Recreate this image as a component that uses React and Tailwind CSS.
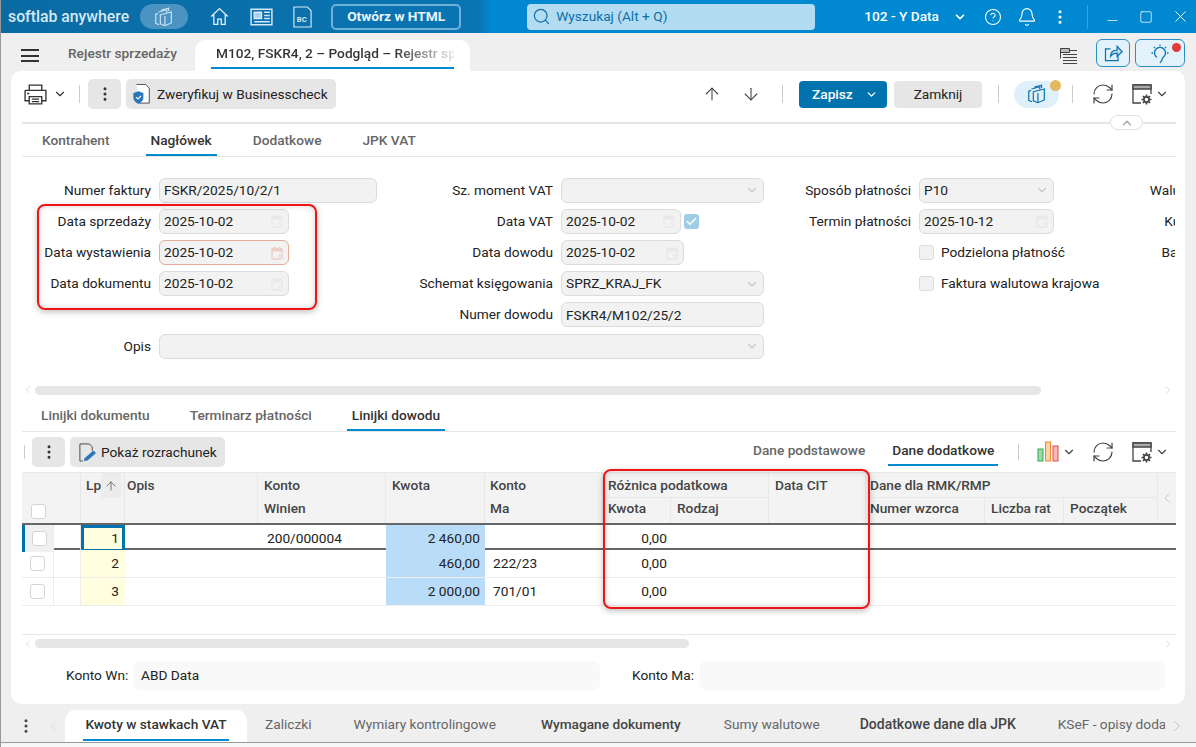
import { ArrowDown, ArrowUp, ChevronDown, ChevronLeft, ChevronRight, ChevronUp, CircleHelp, Bell, EllipsisVertical, Minus, Search, Square, X, RefreshCw, Check } from "lucide-react"

const tableCols =
  "grid-cols-[32px_27px_44px_133px_128px_99px_118px_68px_98px_97px_119px_79px_94px_17px]"

function CubeStack({ className = "", color = "currentColor" }) {
  return (
    <svg viewBox="0 0 24 24" fill="none" stroke={color} strokeWidth="1.3" className={className}>
      <path d="M9 4.5 17 2.5v3M5.5 8 3 9v10l3.5 1.5" />
      <path d="M6 6.5l9-2.5v3" />
      <path d="M8 9.5l12-3v12l-7 3-5-2z" />
      <path d="M13 11v10.5" />
    </svg>
  )
}

function CalendarIcon({ active }) {
  const c = active ? "#ecd0c6" : "#e8e8e8"
  return (
    <svg viewBox="0 0 14 14" className="w-[14px] h-[14px] shrink-0">
      <path
        d="M2 3.5a1 1 0 0 1 1-1h8a1 1 0 0 1 1 1V12a1 1 0 0 1-1 1H3a1 1 0 0 1-1-1z"
        fill="none"
        stroke={c}
        strokeWidth="1.4"
      />
      <path d="M2 3h10v2.6H2z M4 1h1.4v2H4z M8.6 1H10v2H8.6z" fill={c} />
      <rect x="8.5" y="8.8" width="2" height="2" fill={c} />
    </svg>
  )
}

function GridSettings() {
  return (
    <svg viewBox="0 0 24 24" fill="none" stroke="#444" strokeWidth="1.3" className="w-6 h-6">
      <path d="M11 21H3V3h18v9" />
      <path d="M3 3h18v4H3z" fill="#aaa" />
      <circle cx="16.500" cy="17.500" r="2.600" strokeWidth="1.700" />
      <path
        d="M16.500 12.500v2M16.500 20.500v2M11.500 17.500h2M19.500 17.500h2M13 14l1.300 1.300M18.700 19.700 20 21M13 21l1.300-1.300M18.700 15.300 20 14"
        strokeWidth="1.700"
      />
    </svg>
  )
}

function Label({ children }) {
  return <div className="text-right text-[13.7px] leading-[31px] text-[#222] whitespace-nowrap">{children}</div>
}

function Field({ value, width = "w-full", kind, active }) {
  return (
    <div
      className={`${width} h-[25px] flex items-center justify-between pl-[4px] pr-[4px] rounded-[6px] border bg-[#f2f2f2] text-[13.7px] text-[#222] ${
        active ? "border-[#e3ab98]" : "border-[#dcdcdc]"
      }`}
    >
      <span className="whitespace-nowrap">{value}</span>
      {kind === "date" && <CalendarIcon active={active} />}
      {kind === "select" && <ChevronDown className="w-[14px] h-[14px] text-[#c8c8c8]" />}
    </div>
  )
}

function Cell({ children, className = "" }) {
  return <div className={`pl-2 flex items-center h-[31px] ${className}`}>{children}</div>
}

function FormCheck({ label }) {
  return (
    <Cell className="col-span-1 relative">
      <div className="w-[15px] h-[15px] shrink-0 rounded-[3px] border border-[#dcdcdc] bg-[#f2f2f2]" />
      <span className="ml-[7px] text-[13.7px] text-[#222] whitespace-nowrap">{label}</span>
    </Cell>
  )
}

function CutLabel({ children }) {
  return (
    <div className="overflow-hidden h-[31px]">
      <div className="w-[138px] text-right text-[13.7px] leading-[31px] text-[#222]">{children}</div>
    </div>
  )
}

function Tab({ label, active }) {
  return (
    <div
      className={`h-full flex items-center px-[5px] pt-[2px] border-b-2 text-[13.7px] font-medium ${
        active ? "border-[#0089d0] text-[#333]" : "border-transparent text-[#666]"
      }`}
    >
      {label}
    </div>
  )
}

function HeadCell({ children, className = "" }) {
  return (
    <div className={`pl-[6px] pr-[5px] pt-[2px] text-[13.7px] font-medium text-[#444] border-r border-b border-[#e8e8e8] whitespace-nowrap overflow-hidden ${className}`}>
      {children}
    </div>
  )
}

function Box() {
  return <div className="w-[15px] h-[15px] rounded-[3px] border border-[#d4d4d4] bg-white" />
}

function Row({ lp, winien, kwota, ma, selected }) {
  return (
    <div
      className={`grid ${tableCols} text-[13.7px] text-[#222] ${
        selected ? "h-[27px] border-y-[2px] border-[#666]" : "h-[28px] border-b border-[#ececec]"
      }`}
    >
      <div className={`flex items-center justify-center border-r border-[#ececec] ${selected ? "bg-[#f0f0f0] border-l-[3px] border-l-[#0073ae]" : ""}`}>
        <Box />
      </div>
      <div className="border-r border-[#ececec]" />
      <div
        className={`flex items-center justify-end bg-[#ffffe0] ${
          selected ? "pr-[3px] border-[3px] border-[#0073ae]" : "pr-[6px]"
        }`}
      >
        {lp}
      </div>
      <div />
      <div className="flex items-center pl-[9px]">{winien}</div>
      <div className="flex items-center justify-end pr-[5px] bg-[#b9dcf8]">{kwota}</div>
      <div className="flex items-center pl-[8px]">{ma}</div>
      <div className="flex items-center justify-end pr-[4px]">0,00</div>
    </div>
  )
}

function Toolbar2Icons() {
  return (
    <div className="flex items-center">
      <svg viewBox="0 0 22 22" className="w-[22px] h-[22px] ml-[18px]">
        <rect x="1" y="8" width="5" height="12" fill="#9fd8a8" stroke="#2fa84f" />
        <rect x="8.500" y="1" width="5" height="19" fill="#fbd3a8" stroke="#ee8a2d" />
        <rect x="16" y="5" width="5" height="15" fill="#f6b8b8" stroke="#e04a4a" />
      </svg>
      <ChevronDown className="w-[14px] h-[14px] ml-[3px] text-[#444]" />
      <RefreshCw className="w-[24px] h-[24px] ml-[15px] text-[#444]" strokeWidth={1.2} />
      <div className="ml-[15px]">
        <GridSettings />
      </div>
      <ChevronDown className="ml-[1px] w-[14px] h-[14px] text-[#444]" />
    </div>
  )
}

export default function App() {
  return (
    <div className="relative w-[1196px] h-[747px] overflow-hidden bg-[#efefef] border-l border-[#999] font-['Roboto',sans-serif] flex flex-col">
      {/* top bar */}
      <div className="h-[33px] shrink-0 flex items-center text-white bg-[linear-gradient(90deg,#0a6ba3_0%,#0a75b3_40%,#0088d0_41%,#0088d0_100%)]">
        <span className="ml-[7px] text-[15.8px] font-medium text-[#d5e8f3] whitespace-nowrap">softlab anywhere</span>
        <div className="ml-[11px] w-[48px] h-[25px] rounded-full bg-[#4b94c1] flex items-center justify-center shrink-0">
          <CubeStack className="w-[22px] h-[22px]" color="#c9e2f1" />
        </div>
        <svg viewBox="0 0 24 24" fill="none" stroke="#e3f1f9" strokeWidth="1.5" className="ml-[21px] w-[21px] h-[21px] shrink-0">
          <path d="M2.500 12 12 3l9.500 9M5.500 10v11h4.500v-6h4v6h4.500V10" />
        </svg>
        <svg viewBox="0 0 24 24" fill="none" stroke="#d5e8f3" strokeWidth="1.4" className="ml-[19px] w-[25px] h-[25px] shrink-0">
          <path d="M2 5h20v15H2z" />
          <path d="M5 8h7v6H5z" fill="#a9d2ea" />
          <path d="M14.500 8H20M14.500 11H20M14.500 14H20M5 17h15" />
        </svg>
        <svg viewBox="0 0 22 24" fill="none" stroke="#d5e8f3" strokeWidth="1.2" className="ml-[18px] w-[21px] h-[25px] shrink-0">
          <path d="M2 2h14l4 4v17H2z" />
          <text x="5" y="18" fontSize="8" fontWeight="700" fill="#d5e8f3" stroke="none" fontFamily="Roboto">BC</text>
        </svg>
        <div className="ml-[18px] w-[130px] h-[26px] shrink-0 rounded-[5px] border-2 border-[#6fb1d8] flex items-center justify-center text-[13.7px] font-bold text-[#eaf5fb] whitespace-nowrap">
          Otwórz w HTML
        </div>
        <div className="ml-[66px] w-[288px] h-[26px] shrink-0 rounded-[4px] bg-[#b3dcf3] flex items-center pl-[5px] text-[13.7px] text-[#0b6fa8]">
          <Search className="w-[19px] h-[19px]" strokeWidth={1.5} />
          <span className="ml-[5px]">Wyszukaj (Alt + Q)</span>
        </div>
        <span className="ml-[49px] w-[74px] shrink-0 text-[13.7px] font-medium whitespace-nowrap">102 - Y Data</span>
        <ChevronDown className="ml-[15px] w-[14px] h-[14px] shrink-0" strokeWidth={3} />
        <CircleHelp className="ml-[17px] w-[18px] h-[18px] shrink-0" strokeWidth={1.4} />
        <Bell className="ml-[15px] w-[20px] h-[20px] shrink-0" strokeWidth={1.4} />
        <EllipsisVertical className="ml-[14px] w-[18px] h-[18px] shrink-0" strokeWidth={2.2} />
        <div className="ml-[18px] w-px h-[24px] shrink-0 bg-[#3aa3dc]" />
        <Minus className="ml-[17px] w-[15px] h-[15px] mt-[8px] shrink-0" strokeWidth={1.2} />
        <Square className="ml-[19px] w-[14px] h-[14px] shrink-0" strokeWidth={1.3} />
        <X className="ml-[18px] w-[19px] h-[19px] shrink-0" strokeWidth={1.2} />
      </div>

      {/* document tabs */}
      <div className="h-[38px] shrink-0 flex items-end">
        <div className="mb-[9px] ml-[20px] w-[18px] h-[13px] flex flex-col justify-between">
          <div className="h-[2px] bg-[#333]" />
          <div className="h-[2px] bg-[#333]" />
          <div className="h-[2px] bg-[#333]" />
        </div>
        <span className="mb-[7px] ml-[29px] w-[109px] text-[13.7px] font-medium text-[#666] whitespace-nowrap">Rejestr sprzedaży</span>
        <div className="ml-[18px] w-[275px] h-[31px] shrink-0 bg-white rounded-t-[10px] px-[16px]">
          <div className="h-[29px] border-b-2 border-[#0089d0] pl-[5px] flex items-center overflow-hidden text-[13.7px] font-medium text-[#333] whitespace-nowrap">
            <span className="bg-[linear-gradient(90deg,#333_75%,#e5e5e5_100%)] bg-clip-text text-transparent w-full overflow-hidden">
              M102, FSKR4, 2 – Podgląd – Rejestr sp
            </span>
          </div>
        </div>
        <svg viewBox="0 0 19 20" fill="none" stroke="#444" className="mb-[5px] ml-[589px] w-[19px] h-[20px] shrink-0">
          <path d="M1.500 2.500h9v4h-9z" fill="#bbb" />
          <path d="M1.500 2.500v10M10.500 4.500H18M4 8.500h14M4 11.500h14M4 14.500h14M4 17.500h14" />
        </svg>
        <div className="mb-[4px] ml-[18px] w-[34px] h-[28px] shrink-0 rounded-[6px] border border-[#2c8fc4] bg-[#e2f1fa] flex items-center justify-center">
          <svg viewBox="0 0 24 24" fill="none" stroke="#0b73ad" strokeWidth="1.5" className="w-[20px] h-[20px]">
            <path d="M9 7H3v14h15v-6" />
            <path d="M9 16c0-5 3-7.500 8-7.500V4l6 6.500L17 16v-4c-3 0-6 1-8 4z" fill="#bfe0f2" />
          </svg>
        </div>
        <div className="relative mb-[4px] ml-[5px] w-[50px] h-[28px] shrink-0 rounded-[6px] border border-[#2c8fc4] bg-[#e2f1fa] flex items-center justify-center">
          <svg viewBox="0 0 24 24" fill="none" stroke="#0b73ad" strokeWidth="1.3" className="mt-[2px] w-[24px] h-[24px]">
            <path d="M9 15.500a5.500 5.500 0 1 1 6 0c-.8.6-1 1.500-1 2.500l-2 3" />
            <path d="M12 2.500v1.500M3.500 11H5M20.500 11H19M6 5l1 1M18 5l-1 1" />
          </svg>
          <div className="absolute right-[3px] top-[3px] w-[9px] h-[9px] rounded-full bg-[#e23b3b]" />
        </div>
      </div>

      {/* main card */}
      <div className="ml-[10px] w-[1174px] h-[633px] shrink-0 bg-white rounded-[10px] pl-[11px] pr-[9px] flex flex-col relative z-0">
        {/* toolbar */}
        <div className="relative h-[53px] shrink-0 border-b-2 border-[#e6e6e6] flex items-center pb-[5px]">
          <svg viewBox="0 0 24 24" fill="none" stroke="#333" strokeWidth="1.3" className="ml-[1px] w-[25px] h-[25px]">
            <path d="M6 8V3h12v5M2 8h20v10h-4M6 18H2V8M6 14h12v7H6z" />
            <path d="M8.500 16.500h7M8.500 18.800h7M4 11h2" />
          </svg>
          <ChevronDown className="ml-[5px] w-[14px] h-[14px] text-[#333]" strokeWidth={2} />
          <div className="ml-[12px] w-px h-[18px] bg-[#ccc]" />
          <div className="ml-[8px] w-[33px] h-[30px] rounded-[5px] bg-[#e6e6e6] flex items-center justify-center">
            <EllipsisVertical className="w-[18px] h-[18px] text-[#333]" strokeWidth={2} />
          </div>
          <div className="ml-[5px] w-[210px] h-[30px] rounded-[5px] bg-[#e6e6e6] flex items-center pl-[6px] text-[13.7px] text-[#222] whitespace-nowrap">
            <svg viewBox="0 0 22 24" className="w-[20px] h-[22px] shrink-0">
              <path d="M5 1.500h10l4 4V22H8" fill="#fff" stroke="#444" />
              <path d="M1.500 11 7 9l5.500 2v5c0 3-2.500 5-5.500 7-3-2-5.500-4-5.500-7z" fill="#2a77b8" />
              <path d="M4.500 15.500l2 2 3.500-3.500" fill="none" stroke="#fff" strokeWidth="1.300" />
            </svg>
            <span className="ml-[5px]">Zweryfikuj w Businesscheck</span>
          </div>
          <ArrowUp className="ml-[366px] w-[20px] h-[20px] text-[#444]" strokeWidth={1.3} />
          <ArrowDown className="ml-[19px] w-[20px] h-[20px] text-[#444]" strokeWidth={1.3} />
          <div className="ml-[21px] w-px h-[18px] bg-[#ccc]" />
          <div className="ml-[16px] w-[88px] h-[27px] rounded-[4px] bg-[#0073ae] text-white flex items-center justify-between pl-[13px] pr-[9px] text-[13.7px] font-medium">
            Zapisz
            <ChevronDown className="w-[13px] h-[13px]" strokeWidth={2.4} />
          </div>
          <div className="ml-[7px] w-[88px] h-[27px] rounded-[4px] bg-[#e6e6e6] flex items-center justify-center text-[13.7px] text-[#222]">
            Zamknij
          </div>
          <div className="ml-[16px] w-px h-[18px] bg-[#ccc]" />
          <div className="relative ml-[15px] w-[45px] h-[27px] rounded-full bg-[#e0f0fa] flex items-center justify-center">
            <CubeStack className="w-[22px] h-[22px]" color="#0b73ad" />
            <div className="absolute -right-[2px] -top-[1px] w-[11px] h-[11px] rounded-full bg-[#e5b95e]" />
          </div>
          <div className="ml-[13px] w-px h-[18px] bg-[#ccc]" />
          <RefreshCw className="ml-[18px] w-[24px] h-[24px] text-[#444]" strokeWidth={1.2} />
          <div className="ml-[15px]">
            <GridSettings />
          </div>
          <ChevronDown className="ml-[1px] w-[14px] h-[14px] text-[#444]" />
          <div className="absolute left-[1088px] top-[44px] w-[33px] h-[15px] rounded-full border border-[#e0e0e0] bg-white flex items-center justify-center">
            <ChevronUp className="w-[16px] h-[14px] text-[#aaa]" strokeWidth={2.5} />
          </div>
        </div>

        {/* header tabs */}
        <div className="h-[33px] shrink-0 border-b border-[#e6e6e6] flex gap-[31px] pl-[15px]">
          <Tab label="Kontrahent" />
          <Tab label="Nagłówek" active />
          <Tab label="Dodatkowe" />
          <Tab label="JPK VAT" />
        </div>

        {/* form */}
        <div className="mt-[17.7px] shrink-0 grid grid-cols-[129px_226px_176px_211px_147px_143px_121px] auto-rows-[31.2px]">
          <Label>Numer faktury</Label>
          <Cell><Field value="FSKR/2025/10/2/1" /></Cell>
          <Label>Sz. moment VAT</Label>
          <Cell><Field value="" kind="select" /></Cell>
          <Label>Sposób płatności</Label>
          <Cell><Field value="P10" kind="select" /></Cell>
          <CutLabel>Waluta</CutLabel>

          <Label>Data sprzedaży</Label>
          <Cell><Field value="2025-10-02" kind="date" width="w-[130px]" /></Cell>
          <Label>Data VAT</Label>
          <Cell>
            <Field value="2025-10-02" kind="date" width="w-[120px]" />
            <div className="ml-[3px] w-[15px] h-[15px] rounded-[3px] bg-[#9fcde6] flex items-center justify-center">
              <Check className="w-[13px] h-[13px] text-white" strokeWidth={2.5} />
            </div>
          </Cell>
          <Label>Termin płatności</Label>
          <Cell><Field value="2025-10-12" kind="date" /></Cell>
          <CutLabel>Kurs</CutLabel>

          <Label>Data wystawienia</Label>
          <Cell><Field value="2025-10-02" kind="date" width="w-[130px]" active /></Cell>
          <Label>Data dowodu</Label>
          <Cell><Field value="2025-10-02" kind="date" width="w-[123px]" /></Cell>
          <div />
          <FormCheck label="Podzielona płatność" />
          <CutLabel>Bank</CutLabel>

          <Label>Data dokumentu</Label>
          <Cell><Field value="2025-10-02" kind="date" width="w-[130px]" /></Cell>
          <Label>Schemat księgowania</Label>
          <Cell><Field value="SPRZ_KRAJ_FK" kind="select" /></Cell>
          <div />
          <FormCheck label="Faktura walutowa krajowa" />
          <div />

          <div className="col-span-2" />
          <Label>Numer dowodu</Label>
          <Cell><Field value="FSKR4/M102/25/2" /></Cell>
          <div className="col-span-3" />

          <Label>Opis</Label>
          <Cell className="col-span-3"><Field value="" kind="select" /></Cell>
        </div>

        {/* form scrollbar */}
        <div className="mt-[23.3px] h-[10px] shrink-0 flex items-center">
          <ChevronLeft className="w-[12px] h-[12px] text-[#ddd]" />
          <div className="ml-[1px] w-[1006px] h-[9px] rounded-full bg-[#e6e6e6]" />
          <ChevronRight className="ml-[121px] w-[12px] h-[12px] text-[#ddd]" />
        </div>

        {/* lines tabs */}
        <div className="mt-[5px] h-[32px] shrink-0 border-b border-[#e6e6e6] flex gap-[30px] pl-[14px]">
          <Tab label="Linijki dokumentu" />
          <Tab label="Terminarz płatności" />
          <Tab label="Linijki dowodu" active />
        </div>

        {/* lines toolbar */}
        <div className="h-[40px] shrink-0 flex items-center">
          <div className="ml-[2px] w-px h-[14px] bg-[#ccc]" />
          <div className="ml-[7px] w-[33px] h-[30px] rounded-[5px] bg-[#e6e6e6] flex items-center justify-center">
            <EllipsisVertical className="w-[18px] h-[18px] text-[#333]" strokeWidth={2} />
          </div>
          <div className="ml-[5px] w-[155px] h-[30px] rounded-[5px] bg-[#e6e6e6] flex items-center pl-[8px] text-[13.7px] text-[#222] whitespace-nowrap">
            <svg viewBox="0 0 20 22" className="w-[19px] h-[21px] shrink-0">
              <path d="M5 20H2V2h10l3 3v4" fill="none" stroke="#444" />
              <path d="M6 20l1-3 9-8 3 2.500-9 8z" fill="#2a77b8" />
            </svg>
            <span className="ml-[4px]">Pokaż rozrachunek</span>
          </div>
          <div className="ml-[524px] h-[29px] mb-[2px] flex">
            <div className="flex items-center px-[4px] text-[13.7px] font-medium text-[#666] border-b-2 border-transparent whitespace-nowrap">Dane podstawowe</div>
            <div className="ml-[19px] flex items-center px-[4px] text-[13.7px] font-medium text-[#333] border-b-2 border-[#0089d0] whitespace-nowrap">Dane dodatkowe</div>
          </div>
          <div className="ml-[20px] w-px h-[16px] bg-[#ccc]" />
          <Toolbar2Icons />
        </div>

        {/* table */}
        <div className="shrink-0">
          <div className={`grid ${tableCols} grid-rows-[25px_25px] bg-[#f3f3f3] border-t border-[#e8e8e8]`}>
            <div className="col-span-2 row-span-2 border-r border-[#e8e8e8] flex items-end pl-[9px] pb-[4px]">
              <Box />
            </div>
            <HeadCell className="row-span-2 !overflow-visible relative border-b-0 !pl-[5px]">
              Lp
              <div className="absolute right-[3px] top-0 w-[20px] h-[25px] bg-[#ececec] flex items-center justify-center">
                <ArrowUp className="w-[14px] h-[14px] text-[#666]" strokeWidth={1.5} />
              </div>
            </HeadCell>
            <HeadCell className="row-span-2 !pl-[2px] border-b-0">Opis</HeadCell>
            <HeadCell className="border-b-0">Konto</HeadCell>
            <HeadCell className="border-b-0">Kwota</HeadCell>
            <HeadCell className="border-b-0 !pl-[5px]">Konto</HeadCell>
            <HeadCell className="col-span-2 !pl-[5px]">Różnica podatkowa</HeadCell>
            <HeadCell className="row-span-2 border-b-0">Data CIT</HeadCell>
            <HeadCell className="col-span-3 !pl-[4px]">Dane dla RMK/RMP</HeadCell>
            <div className="row-span-2 flex items-center justify-center">
              <ChevronLeft className="w-[16px] h-[20px] text-[#ccc]" strokeWidth={1.5} />
            </div>
            <HeadCell className="border-b-0 !pt-0">Winien</HeadCell>
            <HeadCell className="border-b-0 !pt-0" />
            <HeadCell className="border-b-0 !pt-0 !pl-[5px]">Ma</HeadCell>
            <HeadCell className="border-b-0 !pt-0 !pl-[5px]">Kwota</HeadCell>
            <HeadCell className="border-b-0 !pt-0">Rodzaj</HeadCell>
            <HeadCell className="border-b-0 !pt-0 !pl-[4px]">Numer wzorca</HeadCell>
            <HeadCell className="border-b-0 !pt-0">Liczba rat</HeadCell>
            <HeadCell className="border-b-0 !pt-0">Początek</HeadCell>
          </div>
          <Row selected lp="1" winien="200/000004" kwota="2 460,00" ma="" />
          <Row lp="2" winien="" kwota="460,00" ma="222/23" />
          <Row lp="3" winien="" kwota="2 000,00" ma="701/01" />
        </div>

        {/* table scrollbar */}
        <div className="mt-[28px] h-[18px] shrink-0 border-t border-[#e6e6e6] flex items-center">
          <ChevronLeft className="w-[12px] h-[12px] text-[#ddd]" />
          <div className="ml-[1px] w-[654px] h-[9px] rounded-full bg-[#e6e6e6]" />
          <ChevronRight className="ml-[473px] w-[12px] h-[12px] text-[#ddd]" />
        </div>

        {/* account names */}
        <div className="mt-[9px] h-[29px] shrink-0 flex items-center text-[13.7px] text-[#222]">
          <span className="ml-[44px] w-[62px] whitespace-nowrap">Konto Wn:</span>
          <div className="ml-[5px] w-[467px] h-[29px] rounded-[6px] bg-[#f9f9f9] flex items-center pl-[8px]">ABD Data</div>
          <span className="ml-[32px] w-[62px] whitespace-nowrap">Konto Ma:</span>
          <div className="ml-[6px] w-[465px] h-[29px] rounded-[6px] bg-[#f9f9f9]" />
        </div>
      </div>

      {/* bottom tabs */}
      <div className="h-[38px] shrink-0 flex items-end text-[13.7px] text-[#666] whitespace-nowrap overflow-hidden">
        <EllipsisVertical className="mb-[7px] ml-[16px] w-[18px] h-[18px] text-[#444]" strokeWidth={2} />
        <ChevronLeft className="mb-[6px] ml-[10px] w-[18px] h-[20px] text-[#ddd]" strokeWidth={1.2} />
        <div className="ml-[2px] w-[182px] h-[32px] bg-white rounded-t-[10px] px-[18px]">
          <div className="h-[31px] border-b-2 border-[#0089d0] flex items-center justify-center font-medium text-[#333]">Kwoty w stawkach VAT</div>
        </div>
        <span className="mb-[7px] ml-[18px]">Zaliczki</span>
        <span className="mb-[7px] ml-[42px]">Wymiary kontrolingowe</span>
        <span className="mb-[7px] ml-[45px] font-medium text-[#444]">Wymagane dokumenty</span>
        <span className="mb-[7px] ml-[43px]">Sumy walutowe</span>
        <span className="mb-[7px] ml-[40px] text-[14px] font-medium text-[#444]">Dodatkowe dane dla JPK</span>
        <span className="mb-[7px] ml-[42px] w-[107px] overflow-hidden">KSeF - opisy dodatkowe</span>
        <ChevronRight className="mb-[6px] ml-[3px] w-[18px] h-[20px] text-[#bbb]" strokeWidth={1.2} />
      </div>
      <div className="flex-1 bg-[#f7f7f7] border-t border-[#999]" />

      {/* red highlight frames */}
      <div className="absolute left-[36px] top-[204px] w-[280px] h-[106px] rounded-[8px] border-2 border-[#f01414] shadow-[0_2px_6px_rgba(0,0,0,0.25),inset_0_0_6px_rgba(0,0,0,0.18)] pointer-events-none" />
      <div className="absolute left-[602px] top-[469px] w-[267px] h-[140px] rounded-[8px] border-2 border-[#f01414] shadow-[0_2px_6px_rgba(0,0,0,0.25),inset_0_0_6px_rgba(0,0,0,0.18)] pointer-events-none" />
    </div>
  )
}
